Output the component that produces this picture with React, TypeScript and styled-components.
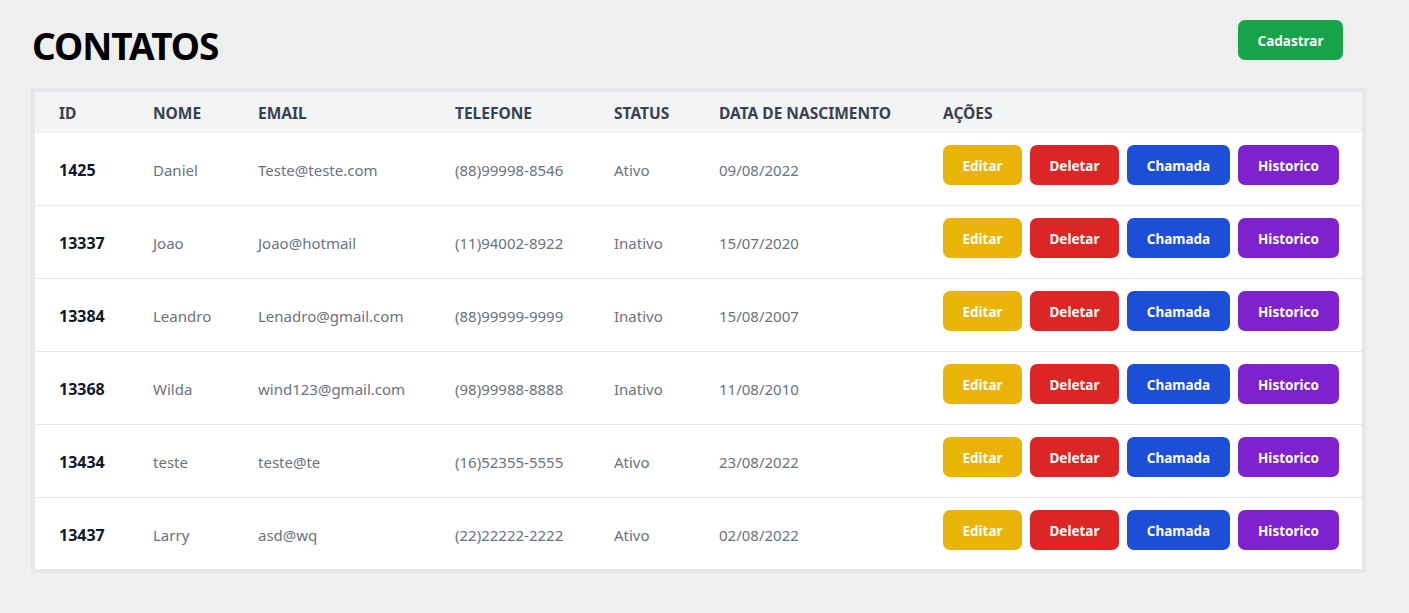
import styled, { createGlobalStyle } from "styled-components";

const GlobalStyle = createGlobalStyle`
  body {
    margin: 0;
    background: #efefef;
    font-family: "Noto Sans", "Open Sans", Arial, sans-serif;
  }
`;

const Page = styled.div`
  padding: 20px 43px 0 31px;
  width: 1335px;
`;

const TopBar = styled.div`
  display: flex;
  justify-content: space-between;
  align-items: flex-start;
  padding-right: 23px;
  height: 68px;
`;

const Title = styled.h1`
  margin: 2px 0 0 1px;
  font-size: 37px;
  font-weight: 700;
  color: #000;
  letter-spacing: -1px;
  line-height: 48px;
`;

const Button = styled.button<{ $bg: string }>`
  background: ${({ $bg }) => $bg};
  color: #fff;
  border: none;
  border-radius: 7px;
  height: 40px;
  padding: 2px 18px 0;
  font-family: inherit;
  font-size: 13.5px;
  font-weight: 700;
  cursor: pointer;
`;

const CadastrarButton = styled(Button)`
  width: 105px;
`;

const Table = styled.div`
  border: 4px solid #e5e7eb;
  background: #fff;
`;

const cols = "94px 105px 197px 159px 105px 224px 1fr";

const HeadRow = styled.div`
  display: grid;
  grid-template-columns: ${cols};
  height: 41px;
  align-items: center;
  background: #f3f4f6;
  padding-left: 24px;
`;

const HeadCell = styled.div`
  font-size: 15.5px;
  font-weight: 700;
  color: #374151;
  text-transform: uppercase;
  padding-top: 1px;
`;

const Row = styled.div<{ $last?: boolean }>`
  display: grid;
  grid-template-columns: ${cols};
  height: ${({ $last }) => ($last ? "71px" : "72px")};
  align-items: center;
  padding-left: 24px;
  border-bottom: ${({ $last }) => ($last ? "none" : "1px solid #e5e7eb")};
`;

const Cell = styled.div<{ $strong?: boolean }>`
  font-size: ${({ $strong }) => ($strong ? "16px" : "15px")};
  color: ${({ $strong }) => ($strong ? "#111827" : "#6b7280")};
  font-weight: ${({ $strong }) => ($strong ? 700 : 400)};
  padding-top: 2px;
`;

const Actions = styled.div`
  display: flex;
  gap: 8px;
  align-self: start;
  padding-top: 12px;
`;

const ActionButton = styled(Button)<{ $w: number }>`
  width: ${({ $w }) => $w}px;
  padding-left: 0;
  padding-right: 0;
`;

const contacts = [
  { id: "1425", nome: "Daniel", email: "Teste@teste.com", tel: "(88)99998-8546", status: "Ativo", nasc: "09/08/2022" },
  { id: "13337", nome: "Joao", email: "Joao@hotmail", tel: "(11)94002-8922", status: "Inativo", nasc: "15/07/2020" },
  { id: "13384", nome: "Leandro", email: "Lenadro@gmail.com", tel: "(88)99999-9999", status: "Inativo", nasc: "15/08/2007" },
  { id: "13368", nome: "Wilda", email: "wind123@gmail.com", tel: "(98)99988-8888", status: "Inativo", nasc: "11/08/2010" },
  { id: "13434", nome: "teste", email: "teste@te", tel: "(16)52355-5555", status: "Ativo", nasc: "23/08/2022" },
  { id: "13437", nome: "Larry", email: "asd@wq", tel: "(22)22222-2222", status: "Ativo", nasc: "02/08/2022" },
];

const actions = [
  { label: "Editar", bg: "#eab308", w: 79 },
  { label: "Deletar", bg: "#dc2626", w: 89 },
  { label: "Chamada", bg: "#1d4ed8", w: 103 },
  { label: "Historico", bg: "#7e22ce", w: 101 },
];

const headers = ["ID", "Nome", "Email", "Telefone", "Status", "Data de nascimento", "Ações"];

export default function App() {
  return (
    <>
      <GlobalStyle />
      <Page>
        <TopBar>
          <Title>CONTATOS</Title>
          <CadastrarButton $bg="#16a34a">Cadastrar</CadastrarButton>
        </TopBar>
        <Table>
          <HeadRow>
            {headers.map((h) => (
              <HeadCell key={h}>{h}</HeadCell>
            ))}
          </HeadRow>
          {contacts.map((c, i) => (
            <Row key={c.id} $last={i === contacts.length - 1}>
              <Cell $strong>{c.id}</Cell>
              <Cell>{c.nome}</Cell>
              <Cell>{c.email}</Cell>
              <Cell>{c.tel}</Cell>
              <Cell>{c.status}</Cell>
              <Cell>{c.nasc}</Cell>
              <Actions>
                {actions.map((a) => (
                  <ActionButton key={a.label} $bg={a.bg} $w={a.w}>
                    {a.label}
                  </ActionButton>
                ))}
              </Actions>
            </Row>
          ))}
        </Table>
      </Page>
    </>
  );
}
